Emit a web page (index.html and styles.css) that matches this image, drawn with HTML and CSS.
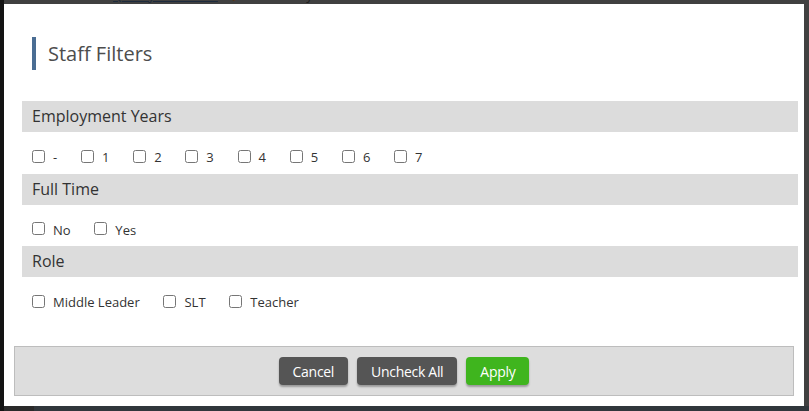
FILE: index.html
```html
<!DOCTYPE html>
<html lang="en">
<head>
<meta charset="utf-8">
<title>Staff Filters</title>
<link rel="stylesheet" href="styles.css">
</head>
<body>
<div class="screen">
  <div class="side"></div>
  <div class="main">
    <div class="crumbs">
      <div class="crumbs-inner">
        <span class="crumb-label">You are here:</span>
        <span class="crumb-link">Quality Assurance</span>
        <span class="crumb-arrow">&#9654;</span>
        <span class="crumb-current">Summary</span>
      </div>
    </div>
    <div class="row">
      <div class="modal">
        <h2 class="title">Staff Filters</h2>

        <div class="section">Employment Years</div>
        <div class="options">
          <label class="opt"><input type="checkbox"><span>-</span></label>
          <label class="opt"><input type="checkbox"><span>1</span></label>
          <label class="opt"><input type="checkbox"><span>2</span></label>
          <label class="opt"><input type="checkbox"><span>3</span></label>
          <label class="opt"><input type="checkbox"><span>4</span></label>
          <label class="opt"><input type="checkbox"><span>5</span></label>
          <label class="opt"><input type="checkbox"><span>6</span></label>
          <label class="opt"><input type="checkbox"><span>7</span></label>
        </div>

        <div class="section">Full Time</div>
        <div class="options">
          <label class="opt"><input type="checkbox"><span>No</span></label>
          <label class="opt"><input type="checkbox"><span>Yes</span></label>
        </div>

        <div class="section">Role</div>
        <div class="options">
          <label class="opt"><input type="checkbox"><span>Middle Leader</span></label>
          <label class="opt"><input type="checkbox"><span>SLT</span></label>
          <label class="opt"><input type="checkbox"><span>Teacher</span></label>
        </div>

        <div class="footer">
          <button class="btn btn-dark">Cancel</button>
          <button class="btn btn-dark">Uncheck All</button>
          <button class="btn btn-green">Apply</button>
        </div>
      </div>
      <div class="right"></div>
    </div>
    <div class="bottom"></div>
  </div>
</div>
</body>
</html>
```

FILE: styles.css
```css
html, body {
  margin: 0;
  padding: 0;
}

body {
  background: #404040;
  font-family: "Open Sans", "Noto Sans", sans-serif;
  overflow: hidden;
}

.screen {
  display: flex;
  height: 411px;
  width: 809px;
}

.side {
  width: 4px;
  background: #131313;
  flex: none;
}

.main {
  flex: 1;
  display: flex;
  flex-direction: column;
  min-width: 0;
}

.crumbs {
  height: 4px;
  overflow: hidden;
  background: #404040;
  flex: none;
}

.crumbs-inner {
  margin-top: -13px;
  padding-left: 28px;
  font-size: 12.5px;
  line-height: 18px;
  color: #1c1c1c;
  white-space: nowrap;
}

.crumb-link {
  color: #1d2b3c;
  text-decoration: underline;
}

.crumb-arrow {
  margin-left: 12px;
  color: #5a3210;
  font-size: 10px;
}

.crumb-current {
  margin-left: 12px;
}

.row {
  display: flex;
  flex: none;
}

.modal {
  width: 800px;
  height: 402px;
  background: #ffffff;
  display: flex;
  flex-direction: column;
  box-sizing: border-box;
}

.right {
  flex: 1;
  background: #404040;
}

.bottom {
  flex: 1;
  background: linear-gradient(to right, #2a2a2a 0, #2a2a2a 30px, #30363b 30px);
}

.title {
  margin: 33px 0 31px 28px;
  padding-left: 12px;
  border-left: 4px solid #4a6d93;
  height: 33px;
  line-height: 33px;
  font-size: 20px;
  font-weight: 400;
  color: #4d4d4d;
}

.section {
  margin: 0 6px 0 18px;
  height: 31px;
  line-height: 31px;
  padding-left: 10px;
  background: #dcdcdc;
  color: #333333;
  font-size: 16px;
  flex: none;
}

.options {
  display: flex;
  align-items: center;
  gap: 23.75px;
  padding: 17.5px 0 11px 28px;
  height: 13px;
  flex: none;
}

.opt {
  display: flex;
  align-items: center;
  font-size: 13px;
  color: #333333;
  line-height: 13px;
}

.opt input {
  margin: 0 8px 0 0;
  width: 13px;
  height: 13px;
}

.opt span {
  position: relative;
  top: 1.5px;
}

.footer {
  margin: auto 10px 10px 10px;
  height: 48px;
  border: 1px solid #bdbdbd;
  background: #dddddd;
  display: flex;
  justify-content: center;
  align-items: center;
  gap: 9px;
  flex: none;
}

.btn {
  font-family: "Open Sans", "Noto Sans", sans-serif;
  font-size: 14px;
  letter-spacing: -0.3px;
  height: 28px;
  padding: 0 14px;
  border: none;
  border-radius: 4px;
  color: #ffffff;
  box-shadow: 0 2px 2px rgba(0, 0, 0, 0.3);
  cursor: pointer;
}

.btn-dark {
  background: #555555;
}

.btn-green {
  background: #3fb51e;
}
```
